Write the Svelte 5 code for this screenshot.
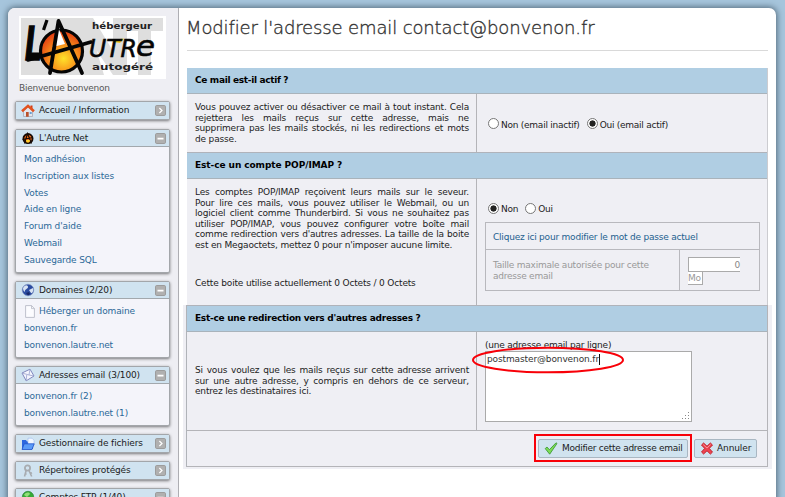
<script>
  const menus = [
    { icon: 'home', title: 'Accueil / Information', open: false, h: 19, gap: 9 },
    { icon: 'anar', title: "L'Autre Net", open: true, h: 144, gap: 8,
      items: ['Mon adhésion', 'Inscription aux listes', 'Votes', 'Aide en ligne', "Forum d'aide", 'Webmail', 'Sauvegarde SQL'] },
    { icon: 'globe', title: 'Domaines (2/20)', open: true, h: 77, gap: 8,
      items: ['Héberger un domaine', 'bonvenon.fr', 'bonvenon.lautre.net'], page: true },
    { icon: 'mail', title: 'Adresses email (3/100)', open: true, h: 60, gap: 8,
      items: ['bonvenon.fr (2)', 'bonvenon.lautre.net (1)'] },
    { icon: 'folder', title: 'Gestionnaire de fichiers', open: false, h: 19, gap: 8 },
    { icon: 'keys', title: 'Répertoires protégés', open: false, h: 19, gap: 8 },
    { icon: 'ftp', title: 'Comptes FTP (1/40)', open: true, h: 60, gap: 7, items: [] }
  ];
</script>

{#snippet glyph(name)}
  <svg class="ico" viewBox="0 0 14 14">
    {#if name === 'home'}
      <path d="M2.5 7v5.5h9V7L7 3z" fill="#e3e6ec" stroke="#a0a0ad" stroke-width=".7" />
      <path d="M9.5 1.5h2v3.5h-2z" fill="#d33d14" />
      <path d="M1 7.3 7 1.9l6 5.4" fill="none" stroke="#e2531f" stroke-width="2.5" />
      <path d="M5 8h2.7v4.7H5z" fill="#b9512b" />
      <path d="M8.7 8h2v2h-2z" fill="#6b9fd0" />
    {:else if name === 'anar'}
      <circle cx="7" cy="7.6" r="4.6" fill="#f36b16" stroke="#160b06" stroke-width="1.8" />
      <path d="M3.5 12.5 6.5 2.5l4 10M1.5 8.5l10.5-2" fill="none" stroke="#160b06" stroke-width="1.2" />
      <path d="M5 9h4l-1 2.4H5.6z" fill="#ffd12d" />
    {:else if name === 'globe'}
      <circle cx="7" cy="7" r="5.8" fill="#2c4ca0" stroke="#8195c2" stroke-width=".6" />
      <path d="M2 5c2-4 5-3 5-1S4 6 4 8 2 8 2 5zM8 7l4-2c1 3-1 6-2 5z" fill="#d8e3f3" />
      <path d="M5 10l3-1 1 2-2 1.5z" fill="#182a69" />
    {:else if name === 'mail'}
      <path d="M1 5 9 1.2 13 8 5.2 12.8z" fill="#f4f5fd" stroke="#8188bd" stroke-width="1" />
      <path d="M1 5l7 2L9 1.2M5.2 12.8 5.7 7M13 8 8 7" fill="none" stroke="#9ba2cd" stroke-width=".8" />
    {:else if name === 'folder'}
      <path d="M1 3h4l1 1.5h6V12H1z" fill="#2d67df" />
      <path d="M7 1.2h4l2 2V8H7z" fill="#f1f6ff" stroke="#90aee8" stroke-width=".5" />
      <path d="M1 12.5 3.2 6.8h10L11 12.5z" fill="#5b9bf7" stroke="#1f52ca" stroke-width=".8" />
    {:else if name === 'keys'}
      <circle cx="6.5" cy="4" r="2.6" fill="none" stroke="#a8acb0" stroke-width="1.8" />
      <path d="M5.3 6 3.5 12.5M7.7 6l3 6.5M4 10h1.6M9.3 9.5l1.7-.8" fill="none" stroke="#a8acb0" stroke-width="1.6" />
    {:else}
      <circle cx="7" cy="7" r="5.7" fill="#36ab37" stroke="#20782c" stroke-width=".6" />
      <path d="M3 5c2-3 5-3 6-1L6 7z" fill="#93df79" />
    {/if}
  </svg>
{/snippet}

<div class="screen">
  <div class="frame">
    <aside>
      <svg class="logo" viewBox="0 0 147 63">
        <defs>
          <radialGradient id="sun" cx=".55" cy=".68" r=".65">
            <stop offset="0" stop-color="#ffe22a" /><stop offset=".45" stop-color="#f99a1c" /><stop offset="1" stop-color="#e33c12" />
          </radialGradient>
        </defs>
        <rect width="147" height="63" fill="#fff" />
        <path d="M2 2h66l17 57H2zM60 2h14l20 33V2h14v57H94L74 29v30H60zM106 2h38v13h-12v44h-13V15h-13z" fill="#dedede" />
        <circle cx="42.5" cy="35" r="21" fill="url(#sun)" stroke="#050505" stroke-width="3.2" />
        <path d="M33.5 31 39 11l7 17z" fill="#fff" />
        <path d="M31 57 39.5 5 63 57" fill="none" stroke="#050505" stroke-width="3.8" stroke-linejoin="round" stroke-linecap="round" />
        <path d="M9 44 72 26" stroke="#050505" stroke-width="3.6" stroke-linecap="round" />
        <text x="6" y="44" class="script" font-size="46" textLength="17" lengthAdjust="spacingAndGlyphs" stroke="#050505" stroke-width="1.6">L</text>
        <path d="M28 4 24.5 14" stroke="#050505" stroke-width="3.2" />
        <path d="M95 26 96 23.5l9-1-4 4.5z" fill="#f5c51c" />
        <text x="70" y="40.5" class="script thin" font-size="25" textLength="48" lengthAdjust="spacingAndGlyphs">UTR</text>
        <text x="117" y="40" class="script thin" font-size="28" textLength="19" lengthAdjust="spacingAndGlyphs">e</text>
        <text x="73" y="12.5" class="tag" textLength="60" lengthAdjust="spacingAndGlyphs">hébergeur</text>
        <text x="73" y="53.5" class="tag" textLength="61" lengthAdjust="spacingAndGlyphs">autogéré</text>
      </svg>
      <p class="hello">Bienvenue bonvenon</p>
      {#each menus as m}
        <section class="menu" style="height:{m.h}px;margin-bottom:{m.gap}px">
          <header class:open={m.open}>
            {@render glyph(m.icon)}
            <span>{m.title}</span>
            <svg class="toggle" viewBox="0 0 11 11">
              <rect x=".5" y=".5" width="10" height="10" rx="1.3" fill="#b0b0b0" stroke="#9c9c9c" />
              {#if m.open}
                <path d="M2.5 5.6h6" stroke="#fff" stroke-width="1.8" />
              {:else}
                <path d="M4.4 3 7 5.5 4.4 8" fill="none" stroke="#fff" stroke-width="1.2" />
              {/if}
            </svg>
          </header>
          {#if m.open}
            <ul>
              {#each m.items as item, i}
                <li>
                  {#if m.page && i === 0}
                    <svg class="page" viewBox="0 0 10 13"><path d="M.6.6h6l2.8 3v8.8H.6z" fill="#fcfcff" stroke="#b8bac6" stroke-width=".9" /><path d="M6.5.6v3h3" fill="none" stroke="#b8bac6" stroke-width=".8" /></svg>
                  {/if}{item}
                </li>
              {/each}
            </ul>
          {/if}
        </section>
      {/each}
    </aside>

    <main>
      <h1>Modifier l'adresse email contact@bonvenon.fr</h1>
      <div class="grid">
        <h2 class="first">Ce mail est-il actif ?</h2>
        <div class="row r1">
          <div class="desc"><p>Vous pouvez activer ou désactiver ce mail à tout instant. Cela rejettera les mails reçus sur cette adresse, mais ne supprimera pas les mails stockés, ni les redirections et mots de passe.</p></div>
          <div class="value">
            <div class="radios"><i class="radio"></i><span class="l1">Non (email inactif)</span><i class="radio on"></i><span>Oui (email actif)</span></div>
          </div>
        </div>
        <h2 class="imap">Est-ce un compte POP/IMAP ?</h2>
        <div class="row r2">
          <div class="desc">
            <p>Les comptes POP/IMAP reçoivent leurs mails sur le seveur. Pour lire ces mails, vous pouvez utiliser le Webmail, ou un logiciel client comme Thunderbird. Si vous ne souhaitez pas utiliser POP/IMAP, vous pouvez configurer votre boîte mail comme redirection vers d'autres adresses. La taille de la boite est en Megaoctets, mettez 0 pour n'imposer aucune limite.</p>
            <p class="usage">Cette boite utilise actuellement 0 Octets / 0 Octets</p>
          </div>
          <div class="value">
            <div class="radios pop"><i class="radio on"></i><span class="l2">Non</span><i class="radio"></i><span>Oui</span></div>
            <div class="inner">
              <div class="pass">Cliquez ici pour modifier le mot de passe actuel</div>
              <div class="size">
                <div class="sizelabel">Taille maximale autorisée pour cette adresse email</div>
                <div class="quota"><div class="num">0</div><div class="mo">Mo</div></div>
              </div>
            </div>
          </div>
        </div>
      </div>
      <div class="patch">
        <div class="grid low">
          <h2>Est-ce une redirection vers d'autres adresses ?</h2>
          <div class="row r3">
            <div class="desc"><p>Si vous voulez que les mails reçus sur cette adresse arrivent sur une autre adresse, y compris en dehors de ce serveur, entrez les destinataires ici.</p></div>
            <div class="value">
              <div class="hint">(une adresse email par ligne)</div>
              <div class="area">
                <span>postmaster@bonvenon.fr</span>
                <svg class="grip" viewBox="0 0 8 8"><path d="M6 0h1v1H6zM3 3h1v1H3zM6 3h1v1H6zM0 6h1v1H0zM3 6h1v1H3zM6 6h1v1H6z" fill="#888" /></svg>
                <svg class="oval" viewBox="0 0 154 28"><ellipse cx="77" cy="14" rx="75" ry="12.3" fill="none" stroke="#f80008" stroke-width="2" /></svg>
              </div>
            </div>
          </div>
          <div class="actions">
            <div class="mark">
              <div class="btn b1">
                <svg viewBox="0 0 14 13"><path d="M1.2 6.6 3 5l2.4 2.7L12 .8l1 .7-7.3 10.7z" fill="#7ddb55" stroke="#329332" stroke-width=".8" /></svg>
                <span>Modifier cette adresse email</span>
              </div>
            </div>
            <div class="btn b2">
              <svg viewBox="0 0 14 13"><path d="M1.5 3 3.6 1 7 4.2 10.4 1l2.1 2-3.2 3.4 3.2 3.7-2.1 2L7 8.8 3.6 12l-2.1-2 3.2-3.6z" fill="#ed4450" stroke="#bd1823" stroke-width=".9" /><path d="M3.3 2.6 7 6l3.5-3.4" fill="none" stroke="#fca5a8" stroke-width=".8" /></svg>
              <span>Annuler</span>
            </div>
          </div>
        </div>
      </div>
    </main>
  </div>
</div>

<style>
  .screen { width: 785px; height: 497px; overflow: hidden; box-sizing: border-box; padding: 8px 9px 0 8px; background: #a6c5dc; font: 9px/10.5px "DejaVu Sans", Verdana, sans-serif; letter-spacing: -.17px; color: #1c1c1c; }
  .screen * { box-sizing: border-box; }
  p, h1, h2, ul { margin: 0; padding: 0; }
  .frame { display: flex; height: 500px; background: #fff; border-radius: 7px 7px 0 0; overflow: hidden; box-shadow: 0 0 6px 1px #52697a; }
  aside { width: 171px; flex: none; padding: 8px 8px 0 7px; background: #eeeef3; border-right: 1px solid #aeaeb3; }
  .logo { display: block; width: 147px; height: 63px; margin-left: 4px; letter-spacing: 0; }
  .script { font-family: "DejaVu Sans", sans-serif; font-style: italic; font-weight: bold; fill: #050505; }
  .thin { font-weight: normal; stroke: #050505; stroke-width: .6px; }
  .tag { font: bold 9.5px "DejaVu Sans", sans-serif; fill: #222; }
  .hello { margin: 4px 0 0 4px; height: 18px; line-height: 11px; letter-spacing: -.25px; color: #555; }
  .menu { width: 155px; background: #f4f4fa; border: 1px solid #a3a6aa; border-radius: 2px; box-shadow: 0 1px 3px rgba(0,0,0,.5); overflow: hidden; }
  .menu header { display: flex; align-items: center; height: 17px; padding: 0 3px 0 5px; background: #d0e3f0; color: #1c1c1c; white-space: nowrap; letter-spacing: -.13px; }
  .menu header.open { border-bottom: 1px solid #a2a8ad; }
  .ico { width: 14px; height: 14px; margin-right: 4px; flex: none; }
  .toggle { width: 11px; height: 11px; margin-left: auto; flex: none; }
  ul { list-style: none; padding: 4px 0 0 8px; }
  li { display: flex; align-items: center; height: 16.75px; color: #2b6898; white-space: nowrap; letter-spacing: -.13px; }
  .page { width: 10px; height: 13px; margin: 0 4px 0 1px; }
  main { flex: 1; padding: 0 0 0 8px; }
  h1 { width: 581px; height: 43px; padding: 9px 0 0; border-bottom: 1px solid #d9d9d9; font-size: 18px; line-height: 22px; font-weight: 200; letter-spacing: -.13px; text-indent: -1px; -webkit-text-stroke: .35px #333; color: #333; white-space: nowrap; }
  .grid { width: 581px; border-right: 1px solid #ccccd0; background: #efeff4; }
  main > .grid { margin-top: 17px; }
  h2 { height: 27px; padding: 0 8px; background: #b0cee3; border-top: 1px solid #b0b3ba; border-bottom: 1px solid #a9b3bb; font-size: 9px; line-height: 25px; letter-spacing: -.28px; color: #000; }
  h2.first { height: 26px; border-top: 0; letter-spacing: -.33px; }
  h2.imap { letter-spacing: -.08px; }
  .row { display: flex; }
  .desc { width: 290px; flex: none; padding: 0 7px 0 8px; border-right: 1px solid #b4b4b8; text-align: justify; display: flex; flex-direction: column; justify-content: center; }
  .value { flex: 1; padding-left: 8px; }
  .r1 { height: 58px; }
  .r2 { height: 126px; }
  .r2 .desc { padding-bottom: 8px; }
  .r3 { height: 98px; }
  .usage { margin-top: 28px; }
  .radios { display: flex; align-items: center; height: 12px; margin: 23px 0 0 3px; letter-spacing: -.25px; }
  .radios span { position: relative; top: 2px; }
  .radio { width: 11px; height: 11px; margin-right: 2px; border: 1px solid #777; border-radius: 50%; background: #fff; flex: none; }
  .radio.on { background: radial-gradient(circle, #222 0 2.8px, #fff 3.4px); }
  .l1, .l2 { margin-right: 7px; }
  .pop { margin-top: 23px; }
  .pop span { top: 1px; }
  .inner { width: 275px; height: 69px; margin-top: 8px; border: 1px solid #b8b8bd; }
  .pass { height: 27px; padding-left: 7px; line-height: 28px; border-bottom: 1px solid #b8b8bd; letter-spacing: -.21px; color: #23618f; }
  .size { display: flex; height: 40px; color: #999; }
  .sizelabel { width: 194px; padding: 10px 20px 0 7px; border-right: 1px solid #b8b8bd; letter-spacing: -.24px; }
  .quota { padding: 7px 0 0 8px; }
  .num { width: 52px; height: 15px; border: 1px solid #aaa; border-right: 0; background: #fff; text-align: right; line-height: 14px; color: #888; }
  .mo { width: 15px; height: 14px; margin-top: -1px; border: 1px solid #aaa; border-left: 0; background: #fff; line-height: 13px; }
  .patch { width: 589px; height: 164px; margin-left: -4px; padding: 0 0 0 4px; background: #efeff4; }
  .low { border-left: 1px solid #b0b3b8; border-right-color: #b4b4b8; margin-left: -1px; width: 582px; border-bottom: 1px solid #b4b4b8; }
  .hint { margin-top: 8px; height: 11px; letter-spacing: -.21px; }
  .area { position: relative; width: 207px; height: 71px; border: 1px solid #aaa; background: #fff; }
  .area span { display: inline-block; margin: 2px 0 0 1px; border-right: 1px solid #111; color: #333; white-space: nowrap; letter-spacing: -.12px; }
  .grip { position: absolute; right: 1px; bottom: 1px; width: 8px; height: 8px; }
  .oval { position: absolute; left: -15px; top: -6px; width: 154px; height: 28px; }
  .actions { height: 36px; display: flex; justify-content: flex-end; padding: 3px 10px 0 0; border-top: 1px solid #b4b4b8; }
  .mark { width: 158px; height: 28px; border: 2px solid #f80008; padding: 3px 2px; margin-right: 2px; }
  .btn { display: flex; align-items: center; height: 19px; padding-left: 5px; border: 1px solid #a9b7c2; border-radius: 2px; background: #d0e3ef; color: #1c1c1c; white-space: nowrap; letter-spacing: -.27px; }
  .btn svg { width: 14px; height: 13px; margin-right: 4px; flex: none; }
  .b2 { width: 63px; margin-top: 5px; letter-spacing: -.1px; }
  .b2 svg { margin-right: 3px; }
</style>
